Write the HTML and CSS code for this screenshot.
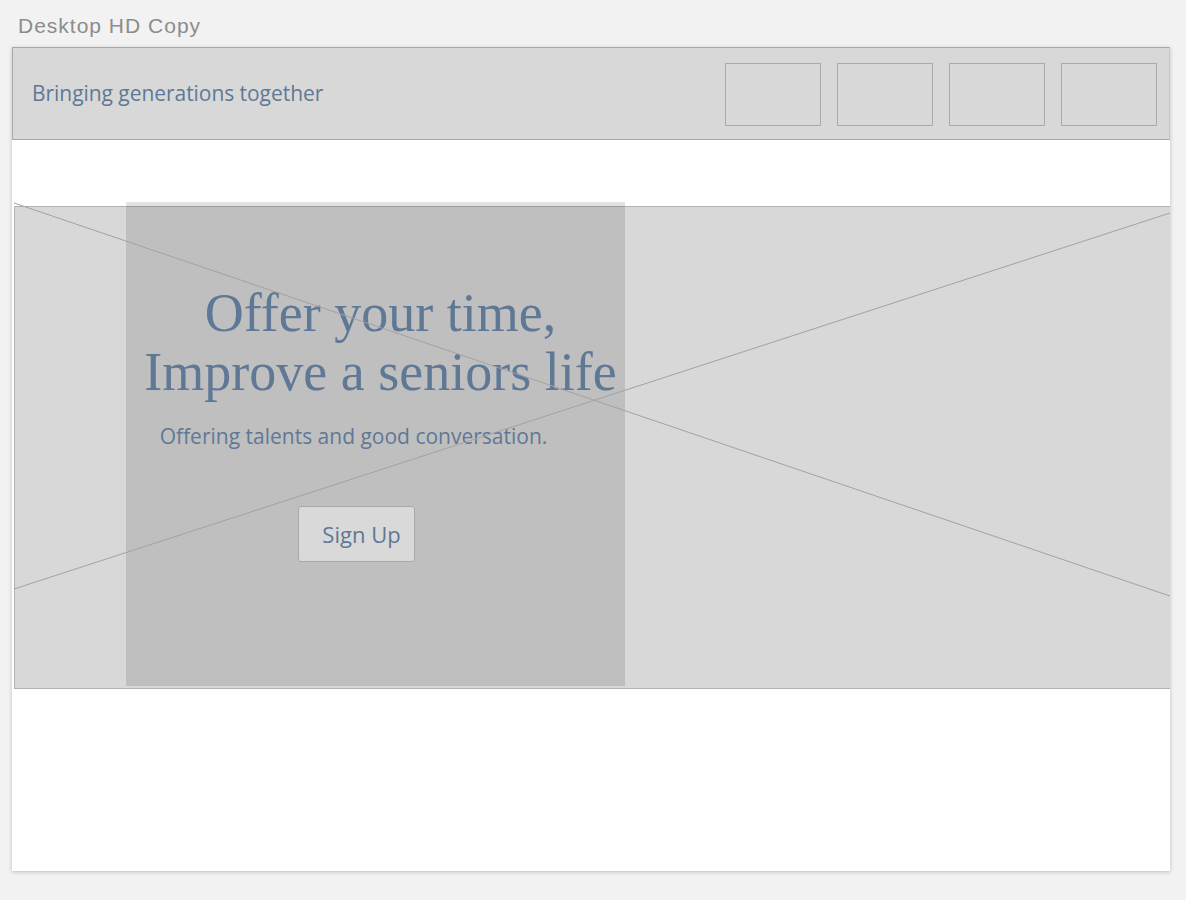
FILE: index.html
```html
<!DOCTYPE html>
<html>
<head>
<meta charset="utf-8">
<link rel="stylesheet" href="styles.css">
</head>
<body>
<div class="board-title">Desktop HD Copy</div>
<div class="artboard">
  <header class="site-header">
    <div class="brand">Bringing generations together</div>
    <nav class="nav">
      <div class="nav-item"></div>
      <div class="nav-item"></div>
      <div class="nav-item"></div>
      <div class="nav-item"></div>
    </nav>
  </header>
  <section class="hero">
    <svg class="hero-cross" width="1156" height="483" viewBox="0 0 1156 483">
      <line x1="0" y1="-3" x2="1156" y2="390" />
      <line x1="0" y1="383" x2="1156" y2="7" />
    </svg>
    <div class="hero-panel">
      <h1 class="hero-title">Offer your time,<br>Improve a seniors life</h1>
      <p class="hero-sub">Offering talents and good conversation.</p>
      <button class="signup">Sign Up</button>
    </div>
  </section>
</div>
</body>
</html>
```
FILE: styles.css
```css
html, body {
  margin: 0;
  padding: 0;
}
body {
  background: #f2f2f2;
  width: 1186px;
  height: 900px;
  overflow: hidden;
}
.board-title {
  font-family: "Liberation Sans", Arial, sans-serif;
  font-size: 21px;
  letter-spacing: 1px;
  color: #8c8c8c;
  padding: 14px 0 0 18px;
  height: 33px;
  line-height: 24px;
  box-sizing: border-box;
}
.artboard {
  margin: 14px 0 0 12px;
  width: 1158px;
  height: 824px;
  background: #ffffff;
  box-shadow: 0 1px 4px rgba(0,0,0,0.22);
  position: relative;
}
.site-header {
  height: 93px;
  box-sizing: border-box;
  background: #d8d8d8;
  border: 1px solid #a9a9a9;
  border-right-color: #c8c8c8;
  display: flex;
  align-items: center;
  justify-content: space-between;
  padding: 0 12px 0 19px;
}
.brand {
  font-family: "Open Sans", sans-serif;
  font-size: 21px;
  letter-spacing: -0.05px;
  color: #5f7896;
  margin-top: -2px;
}
.nav {
  display: flex;
  gap: 16px;
  margin-top: 1px;
}
.nav-item {
  width: 96px;
  height: 63px;
  box-sizing: border-box;
  border: 1px solid #aaaaaa;
  background: #d8d8d8;
}
.hero {
  position: relative;
  margin: 66px 0 0 2px;
  width: 1156px;
  height: 483px;
  box-sizing: border-box;
  background: #d8d8d8;
  border: 1px solid #b2b2b2;
  border-right: none;
}
.hero-cross {
  position: absolute;
  left: -1px;
  top: -1px;
  overflow: visible;
  pointer-events: none;
  z-index: 2;
}
.hero-cross line {
  stroke: #a2a2a2;
  stroke-width: 1;
}
.hero-panel {
  position: absolute;
  left: 111px;
  top: -5px;
  width: 499px;
  height: 484px;
  background: rgba(0,0,0,0.115);
  z-index: 1;
  display: flex;
  flex-direction: column;
  align-items: center;
}
.hero-title {
  margin: 82px 0 0 10px;
  font-family: "Liberation Serif", "Times New Roman", serif;
  font-weight: normal;
  font-size: 54px;
  line-height: 59px;
  text-align: center;
  color: #5f7896;
  position: relative;
  z-index: 3;
}
.hero-sub {
  margin: 20px 0 0 -44px;
  font-family: "Open Sans", sans-serif;
  font-size: 21px;
  color: #5f7896;
  position: relative;
  z-index: 3;
}
.signup {
  margin: 56px 0 0 -38px;
  width: 117px;
  height: 56px;
  box-sizing: border-box;
  background: #d9d9d9;
  border: 1px solid #a8a8a8;
  border-radius: 3px;
  font-family: "Open Sans", sans-serif;
  font-size: 22px;
  color: #5f7896;
  padding: 0 0 0 10px;
  position: relative;
  z-index: 3;
}
```
